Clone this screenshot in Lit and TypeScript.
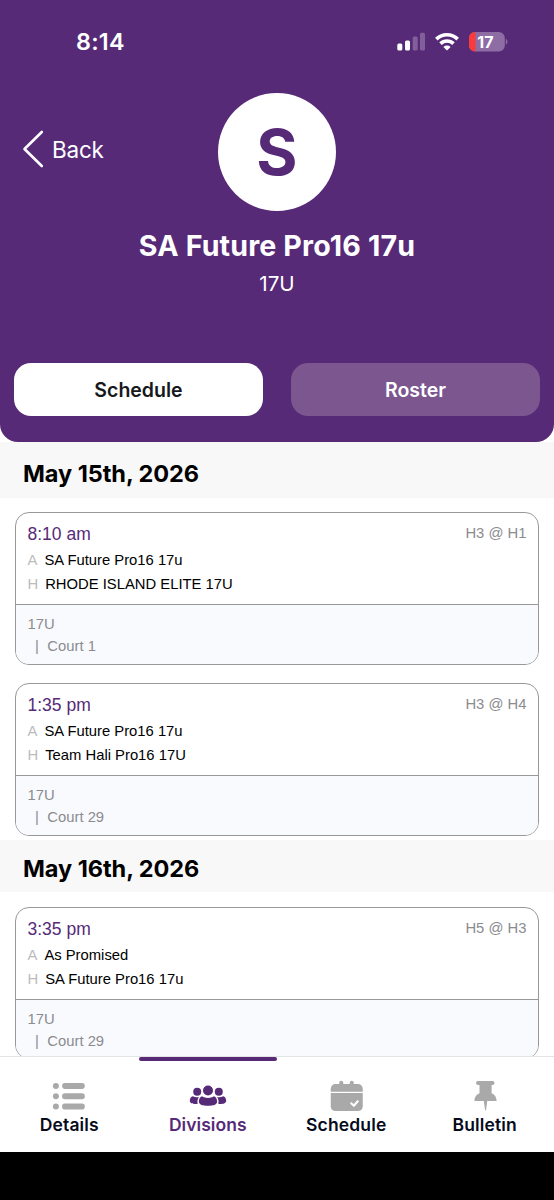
import { LitElement, html, svg, css } from "lit";
import { customElement } from "lit/decorators.js";

type Game = { time: string; slot: string; away: string; home: string; division: string; court: string };
type Day = { label: string; games: Game[] };

const DAYS: Day[] = [
  {
    label: "May 15th, 2026",
    games: [
      { time: "8:10 am", slot: "H3 @ H1", away: "SA Future Pro16 17u", home: "RHODE ISLAND ELITE 17U", division: "17U", court: "Court 1" },
      { time: "1:35 pm", slot: "H3 @ H4", away: "SA Future Pro16 17u", home: "Team Hali Pro16 17U", division: "17U", court: "Court 29" },
    ],
  },
  {
    label: "May 16th, 2026",
    games: [
      { time: "3:35 pm", slot: "H5 @ H3", away: "As Promised", home: "SA Future Pro16 17u", division: "17U", court: "Court 29" },
    ],
  },
];

const ICONS = {
  details: svg`
    <circle cx="5.9" cy="9.9" r="3"/><circle cx="5.9" cy="20.3" r="3"/><circle cx="5.9" cy="30.5" r="3"/>
    <rect x="12.1" y="6.9" width="22.7" height="6" rx="2.8"/>
    <rect x="12.1" y="17.3" width="22.7" height="6" rx="2.8"/>
    <rect x="12.1" y="27.500" width="22.7" height="6" rx="2.8"/>`,
  divisions: svg`
    <circle cx="19" cy="14.5" r="5"/><circle cx="8.2" cy="15.8" r="4"/><circle cx="29.8" cy="15.8" r="4"/>
    <path d="M13 20.3c1.8 1.1 3.8 1.6 6 1.6s4.200-.5 6-1.600c2.100.6 3.100 2.700 3.100 5.200 0 3.300-3.900 4.300-9.100 4.300s-9.100-1-9.100-4.300c0-2.500 1-4.600 3.100-5.200z"/>
    <path d="M3.800 20.300c1.900 1 4.300 1.200 6.300.7-1.500 1.700-1.900 3.700-1.500 7-4.300.3-7.800-.3-7.800-3.200 0-2.200 1.200-4 3-4.500z"/>
    <path d="M34.200 20.300c-1.900 1-4.300 1.200-6.300.7 1.500 1.700 1.900 3.700 1.500 7 4.300.3 7.800-.3 7.800-3.200 0-2.200-1.200-4-3-4.500z"/>`,
  schedule: svg`
    <g transform="translate(.75 0)">
      <path d="M3 15.700V13c0-3 1.800-5 5-5h3.500V6.700a2 2 0 0 1 4 0V8h6.500V6.700a2 2 0 0 1 4 0V8H30c3.200 0 5 2 5 5v2.700z"/>
      <path d="M3 17h32v13.300c0 3-1.800 4.700-5 4.700H8c-3.200 0-5-1.700-5-4.700z"/>
      <path d="M23.500 27.300l2.600 2.400 3.900-4.400" fill="none" stroke="#fff" stroke-width="2.100" stroke-linecap="round" stroke-linejoin="round"/>
    </g>`,
  bulletin: svg`
    <path d="M12 5h14.500a1.900 1.900 0 0 1 0 4h-.9v8.200c3.400 1.500 5 4 5 7.800H8.400c0-3.800 1.700-6.300 5.100-7.800V9H12a1.900 1.900 0 0 1 0-4z"/>
    <path d="M17.800 25h3.400l-1.200 9.500h-.8z"/>`,
};

@customElement("app-root")
export class AppRoot extends LitElement {
  static styles = css`
    :host {
      display: flex;
      flex-direction: column;
      height: 1200px;
      overflow: hidden;
      background: #fff;
      font-family: Inter, "Liberation Sans", sans-serif;
    }
    .header {
      flex: none;
      box-sizing: border-box;
      height: 442px;
      background: #572a78;
      color: #fff;
      border-radius: 0 0 18px 18px;
    }
    .status {
      display: flex;
      justify-content: space-between;
      align-items: center;
      height: 83px;
      padding: 0 46px 0 76px;
    }
    .clock { font-size: 23.300px; font-weight: 600; letter-spacing: 0.250px; }
    .status-icons { display: block; }
    .charge { font: 700 16px Inter, sans-serif; letter-spacing: 0; }
    .hero {
      display: grid;
      grid-template-columns: 1fr 118px 1fr;
      align-items: center;
      margin-top: 10px;
    }
    .back {
      display: flex;
      align-items: center;
      gap: 8px;
      padding: 0 0 6px 22px;
      font-size: 22.500px;
      font-weight: 400;
      letter-spacing: -0.200px;
    }
    .avatar {
      height: 118px;
      border-radius: 50%;
      background: #fff;
      color: #572a78;
      font-size: 63px;
      font-weight: 700;
      line-height: 118px;
      text-align: center;
    }
    .title {
      margin: 17px 0 0;
      font-size: 28.600px;
      line-height: 36px;
      font-weight: 700;
      letter-spacing: 0.150px;
      text-align: center;
    }
    .subtitle {
      margin-top: 7px;
      font-size: 20.600px;
      line-height: 25px;
      text-align: center;
    }
    .tabs {
      display: grid;
      grid-template-columns: 1fr 1fr;
      gap: 28px;
      padding: 0 14px;
      margin-top: 67px;
    }
    .tab {
      height: 53px;
      border-radius: 17px;
      background: #7b568f;
      font-size: 19.500px;
      line-height: 55px;
      font-weight: 600;
      text-align: center;
    }
    .tab.on { background: #fff; color: #16181b; }
    .list { flex: 1; min-height: 0; overflow: hidden; }
    .date {
      margin: 0;
      height: 52px;
      padding-left: 23px;
      background: #f8f8f8;
      font-size: 23.500px;
      line-height: 57px;
      letter-spacing: -0.050px;
      font-weight: 700;
      color: #000;
    }
    .date.first { height: 55.500px; line-height: 63px; }
    .games {
      display: flex;
      flex-direction: column;
      gap: 18.500px;
      padding: 14.500px 15px 4px;
    }
    .card {
      box-sizing: border-box;
      height: 152.800px;
      border: 1px solid #98989b;
      border-radius: 14px;
      overflow: hidden;
      font-family: "Liberation Sans", Arial, sans-serif;
      font-size: 14.800px;
      color: #000;
    }
    .top {
      box-sizing: border-box;
      height: 92px;
      border-bottom: 1px solid #98989b;
      padding: 10px 12px 0 11.500px;
    }
    .when {
      display: flex;
      justify-content: space-between;
      line-height: 22px;
      margin-bottom: 3px;
    }
    .time { font-size: 17.500px; color: #572a78; }
    .slot { line-height: 20px; margin-right: -0.500px; color: #8b8c90; }
    .team { display: flex; gap: 7px; line-height: 24px; }
    .side { color: #bcbcbc; }
    .place {
      height: 100%;
      padding: 8px 12px 0 11.500px;
      background: #f9fafe;
      color: #8b8c90;
      line-height: 22px;
    }
    .court { display: flex; gap: 8.500px; padding-left: 7.500px; }
    .nav {
      flex: none;
      box-sizing: border-box;
      height: 96px;
      display: grid;
      grid-template-columns: repeat(4, 1fr);
      border-top: 1px solid #e4e4e6;
      background: #fff;
    }
    .item {
      display: flex;
      flex-direction: column;
      align-items: center;
      font-size: 17.500px;
      font-weight: 600;
      letter-spacing: 0.150px;
      line-height: 22px;
      color: #060b1c;
    }
    .mark { width: 100%; height: 4px; border-radius: 2px; }
    .icon { margin-top: 15px; width: 38px; height: 38px; fill: #a9a9a9; }
    .item.on { color: #572a78; letter-spacing: 0.050px; }
    .item.on .mark { background: #572a78; }
    .item.on .icon { fill: #572a78; }
    .home { flex: none; height: 48px; background: #000; }
  `;

  private game(g: Game) {
    return html`
      <article class="card">
        <div class="top">
          <div class="when"><span class="time">${g.time}</span><span class="slot">${g.slot}</span></div>
          <div class="team"><span class="side">A</span><span>${g.away}</span></div>
          <div class="team"><span class="side">H</span><span>${g.home}</span></div>
        </div>
        <div class="place">
          <div>${g.division}</div>
          <div class="court"><span>|</span><span>${g.court}</span></div>
        </div>
      </article>`;
  }

  private item(label: string, icon: unknown, on = false) {
    return html`
      <div class="item ${on ? "on" : ""}">
        <div class="mark"></div>
        <svg class="icon" viewBox="0 0 38 38">${icon}</svg>
        <span>${label}</span>
      </div>`;
  }

  render() {
    return html`
      <header class="header">
        <div class="status">
          <span class="clock">8:14</span>
          <svg class="status-icons" width="112" height="24" viewBox="396 29.500 112 24">
            <g fill="#fff">
              <rect x="397.300" y="43" width="5" height="7" rx="1.500"/>
              <rect x="405" y="40" width="5" height="10" rx="1.500"/>
              <rect x="412.700" y="36" width="5" height="14" rx="1.500" opacity=".25"/>
              <rect x="420" y="32.300" width="5" height="17.700" rx="1.500" opacity=".25"/>
            </g>
            <g fill="none" stroke="#fff" stroke-width="3.600">
              <path d="M436.300 38.600a15.300 15.300 0 0 1 21.400 0"/>
              <path d="M440.500 43.100a9.300 9.300 0 0 1 13 0"/>
            </g>
            <path d="M443.400 46.400a5.200 5.200 0 0 1 7.200 0L447 50z" fill="#fff"/>
            <rect x="469" y="31.500" width="35.800" height="19.500" rx="6" fill="#8d6da3"/>
            <path d="M475.500 31.500v19.500h-.5a6 6 0 0 1-6-6v-7.500a6 6 0 0 1 6-6z" fill="#fb3b3a"/>
            <path d="M505.800 38.300c2.200.8 2.200 5.200 0 6z" fill="#8d6da3"/>
            <text class="charge" x="477.300" y="47" fill="#fff">17</text>
          </svg>
        </div>
        <div class="hero">
          <div class="back">
            <svg width="22" height="38" viewBox="0 0 22 38" fill="none" stroke="#fff" stroke-width="2.600" stroke-linecap="round" stroke-linejoin="round">
              <path d="M19.800 2L2.500 19l17.300 17"/>
            </svg>
            <span>Back</span>
          </div>
          <div class="avatar">S</div>
        </div>
        <h1 class="title">SA Future Pro16 17u</h1>
        <div class="subtitle">17U</div>
        <div class="tabs">
          <div class="tab on">Schedule</div>
          <div class="tab">Roster</div>
        </div>
      </header>
      <main class="list">
        ${DAYS.map((d, i) => html`
          <h2 class="date ${i === 0 ? "first" : ""}">${d.label}</h2>
          <div class="games">${d.games.map((g) => this.game(g))}</div>`)}
      </main>
      <nav class="nav">
        ${this.item("Details", ICONS.details)}
        ${this.item("Divisions", ICONS.divisions, true)}
        ${this.item("Schedule", ICONS.schedule)}
        ${this.item("Bulletin", ICONS.bulletin)}
      </nav>
      <div class="home"></div>`;
  }
}
